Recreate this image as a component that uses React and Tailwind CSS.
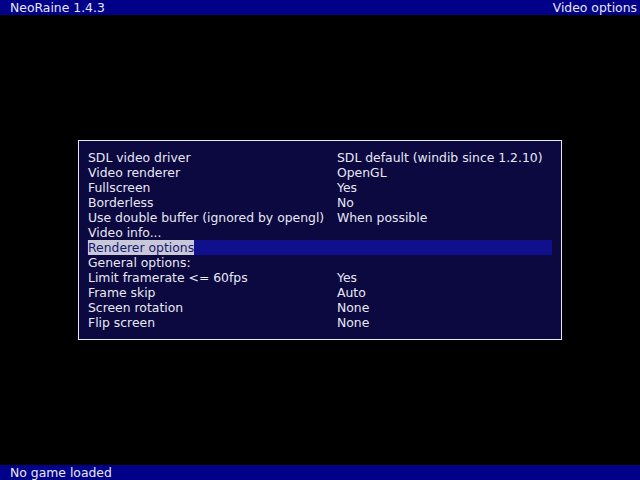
const ROWS = [
  { label: "SDL video driver", value: "SDL default (windib since 1.2.10)" },
  { label: "Video renderer", value: "OpenGL" },
  { label: "Fullscreen", value: "Yes" },
  { label: "Borderless", value: "No" },
  { label: "Use double buffer (ignored by opengl)", value: "When possible" },
  { label: "Video info..." },
  { label: "Renderer options", selected: true },
  { label: "General options:" },
  { label: "Limit framerate <= 60fps", value: "Yes" },
  { label: "Frame skip", value: "Auto" },
  { label: "Screen rotation", value: "None" },
  { label: "Flip screen", value: "None" },
];

export default function App() {
  return (
    <div
      className="w-[640px] h-[480px] bg-black flex flex-col text-[12.4px] leading-[15px] text-[#e8e8f4] overflow-hidden"
      style={{ fontFamily: '"DejaVu Sans", sans-serif' }}
    >
      {/* Title bar */}
      <div className="h-[15px] bg-[#000088] flex justify-between pl-[10px] pr-[3px] leading-[16px]">
        <span>NeoRaine 1.4.3</span>
        <span>Video options</span>
      </div>

      {/* Menu */}
      <div className="flex-1 flex items-start pt-[125px] pl-[78px]">
        <div className="w-[484px] border border-[#e8e8f4] bg-[#0c0840] pt-[9px] pb-[9px] pl-[8px] pr-[9px]">
          {ROWS.map((r) => (
            <div
              key={r.label}
              className={"h-[15px] flex pl-[1px] leading-[16px] " + (r.selected ? "bg-[#10108c]" : "")}
            >
              <span className="w-[249px] shrink-0">
                <span className={"inline-block h-[15px] " + (r.selected ? "bg-[#c8c8d8] text-[#1a1870]" : "")}>
                  {r.label}
                </span>
              </span>
              {r.value && <span>{r.value}</span>}
            </div>
          ))}
        </div>
      </div>

      {/* Status bar */}
      <div className="h-[15px] bg-[#000088] pl-[10px] leading-[16px]">No game loaded</div>
    </div>
  );
}
